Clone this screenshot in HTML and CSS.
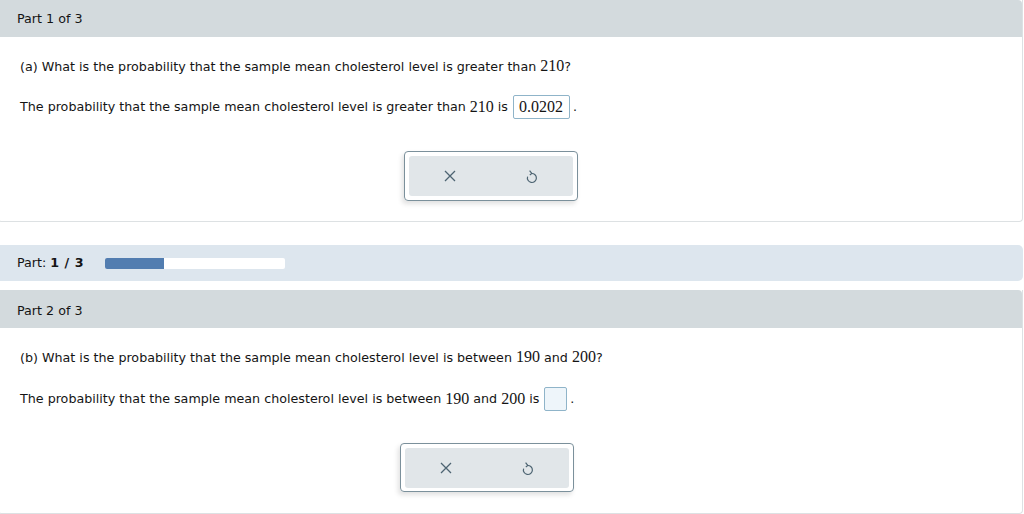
FILE: index.html
```html
<!doctype html>
<html lang=en>
<head>
    <title>Part 1 of 3</title>
    <link rel="stylesheet" href="styles.css">
</head>
<body>
<div class="page">

    <div class="card">
        <div class="card-head">Part 1 of 3</div>
        <div class="card-body">
            <p class="question">(a) What is the probability that the sample mean cholesterol level is greater than <span class="math">210</span>?</p>
            <p class="answer">The probability that the sample mean cholesterol level is greater than <span class="math">210</span> is <span class="box filled">0.0202</span>.</p>
            <div class="tools">
                <div class="tools-inner">
                    <span class="tool">
                        <svg width="14" height="14" viewBox="0 0 14 14"><path d="M2 2 L12 12 M12 2 L2 12" stroke="#4d6472" stroke-width="1.3" fill="none"/></svg>
                    </span>
                    <span class="tool">
                        <svg width="14" height="16" viewBox="0 0 14 16"><path d="M6.5 5.5 A4.5 4.5 0 1 1 2.6 8.6" stroke="#4d6472" stroke-width="1.2" fill="none"/><path d="M4.6 2.6 L6.8 5.5 L4.8 7" stroke="#4d6472" stroke-width="1.2" fill="none"/></svg>
                    </span>
                </div>
            </div>
        </div>
    </div>

    <div class="progress">
        <span class="progress-label">Part: <b>1 / 3</b></span>
        <div class="bar"><div class="fill" style="width: 33%"></div></div>
    </div>

    <div class="card">
        <div class="card-head">Part 2 of 3</div>
        <div class="card-body">
            <p class="question">(b) What is the probability that the sample mean cholesterol level is between <span class="math">190</span> and <span class="math">200</span>?</p>
            <p class="answer">The probability that the sample mean cholesterol level is between <span class="math">190</span> and <span class="math">200</span> is <span class="box empty"></span>.</p>
            <div class="tools">
                <div class="tools-inner">
                    <span class="tool">
                        <svg width="14" height="14" viewBox="0 0 14 14"><path d="M2 2 L12 12 M12 2 L2 12" stroke="#4d6472" stroke-width="1.3" fill="none"/></svg>
                    </span>
                    <span class="tool">
                        <svg width="14" height="16" viewBox="0 0 14 16"><path d="M6.5 5.5 A4.5 4.5 0 1 1 2.6 8.6" stroke="#4d6472" stroke-width="1.2" fill="none"/><path d="M4.6 2.6 L6.8 5.5 L4.8 7" stroke="#4d6472" stroke-width="1.2" fill="none"/></svg>
                    </span>
                </div>
            </div>
        </div>
    </div>

</div>
</body>
</html>
```

FILE: styles.css
```css
* {
    padding: 0;
    margin: 0;
    box-sizing: border-box;
}
body {
    font: 12.7px/16px "DejaVu Sans", Verdana, sans-serif;
    color: #141414;
    background: #fff;
    overflow: hidden;
}
.page {
    margin-left: -2px;
    width: 1025px;
}
.card {
    border: 1px solid #dde1e3;
    border-top: none;
    border-radius: 0 0 4px 4px;
}
.card-head {
    height: 37px;
    background: #d3dadd;
    padding: 11px 0 0 18px;
    border-radius: 0 4px 0 0;
}
.card-body {
    padding: 20px 0 20px 21px;
}
.question {
    height: 16px;
}
.answer {
    margin-top: 22px;
    display: flex;
    align-items: center;
    white-space: pre;
    height: 24px;
}
.math {
    font: 16px "Liberation Serif", "Times New Roman", serif;
}
.box {
    display: inline-block;
    height: 24px;
    border: 1px solid #8fb4c9;
    border-radius: 2px;
    margin: 0 3px 0 1px;
    font: 16px/22px "Liberation Serif", "Times New Roman", serif;
}
.filled {
    padding: 0 6px 0 5px;
}
.empty {
    width: 23px;
    background: #eef5fa;
}
.tools {
    margin: 32px 0 0 384px;
    width: 174px;
    height: 50px;
    border: 1px solid #7b909b;
    border-radius: 4px;
    padding: 4px;
    box-shadow: -2px 3px 5px rgba(0, 0, 0, 0.12);
}
.tools-inner {
    height: 40px;
    background: #e1e6e9;
    border-radius: 3px;
    display: flex;
}
.tool {
    flex: 1;
    display: flex;
    align-items: center;
    justify-content: center;
}
.progress {
    margin-top: 23px;
    height: 36px;
    background: #dde6ee;
    border-radius: 0 5px 5px 0;
    display: flex;
    align-items: center;
    padding-left: 19px;
}
.progress-label {
    width: 88px;
}
.progress b {
    letter-spacing: 0.5px;
}
.bar {
    width: 180px;
    height: 11px;
    background: #fff;
    border-radius: 2px;
    overflow: hidden;
}
.fill {
    height: 100%;
    background: #527db0;
}
.progress + .card {
    margin-top: 9px;
}
.progress + .card .card-head {
    height: 38px;
    padding-top: 13px;
}
.progress + .card .card-body {
    padding-bottom: 21px;
}
.progress + .card .answer {
    margin-top: 23px;
}
.progress + .card .tools {
    margin-left: 380px;
    margin-top: 32px;
    height: 49px;
}
```
